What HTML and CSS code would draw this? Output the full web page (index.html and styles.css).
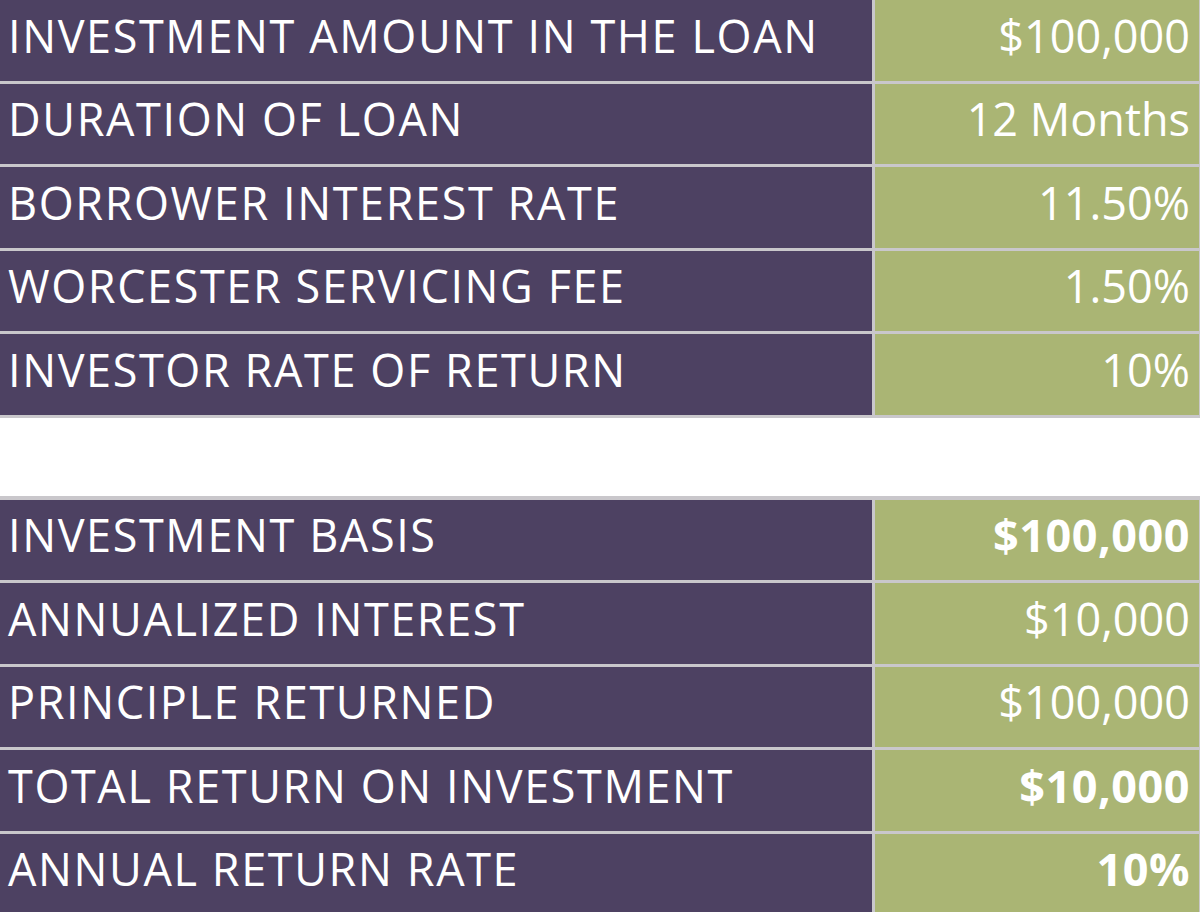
FILE: index.html
```html
<!DOCTYPE html>
<html>
<head>
<meta charset="utf-8">
<link rel="stylesheet" href="styles.css">
</head>
<body>
<div class="page">
  <table class="grid grid-first">
    <tr><td class="label">INVESTMENT AMOUNT IN THE LOAN</td><td class="value">$100,000</td></tr>
    <tr><td class="label">DURATION OF LOAN</td><td class="value">12 Months</td></tr>
    <tr><td class="label">BORROWER INTEREST RATE</td><td class="value">11.50%</td></tr>
    <tr><td class="label">WORCESTER SERVICING FEE</td><td class="value">1.50%</td></tr>
    <tr><td class="label">INVESTOR RATE OF RETURN</td><td class="value">10%</td></tr>
  </table>
  <table class="grid grid-second">
    <tr><td class="label">INVESTMENT BASIS</td><td class="value strong">$100,000</td></tr>
    <tr><td class="label">ANNUALIZED INTEREST</td><td class="value">$10,000</td></tr>
    <tr><td class="label">PRINCIPLE RETURNED</td><td class="value">$100,000</td></tr>
    <tr><td class="label">TOTAL RETURN ON INVESTMENT</td><td class="value strong">$10,000</td></tr>
    <tr><td class="label">ANNUAL RETURN RATE</td><td class="value strong">10%</td></tr>
  </table>
</div>
</body>
</html>
```
FILE: styles.css
```css
html, body {
  margin: 0;
  padding: 0;
  background: #ffffff;
}
body {
  width: 1200px;
  height: 912px;
  overflow: hidden;
  font-family: "Open Sans", "DejaVu Sans", sans-serif;
}
.page {
  display: flex;
  flex-direction: column;
  gap: 78px;
}
.grid {
  width: 1200px;
  border-collapse: separate;
  border-spacing: 0;
  table-layout: fixed;
}
.grid-first {
  margin-top: -3px;
}
.grid td {
  height: 70.5px;
  padding: 0 0 10px 0;
  border-top: 3px solid #c9c7cb;
  color: #ffffff;
  font-size: 45px;
  line-height: 1;
  vertical-align: middle;
  white-space: nowrap;
}
.grid tr:last-child td {
  border-bottom: 3px solid #c9c7cb;
}
.grid-second tr:first-child td {
  border-top-width: 4px;
}
.label {
  width: 864px;
  padding-left: 8px !important;
  background: #4d4162;
  letter-spacing: 1.6px;
}
.value {
  background: #aab574;
  border-left: 3px solid #c9c7cb;
  border-right: 1px solid #c9c7cb;
  text-align: right;
  padding-right: 9px !important;
  letter-spacing: 0;
}
.strong {
  font-weight: 700;
  letter-spacing: 0.5px;
}
```
